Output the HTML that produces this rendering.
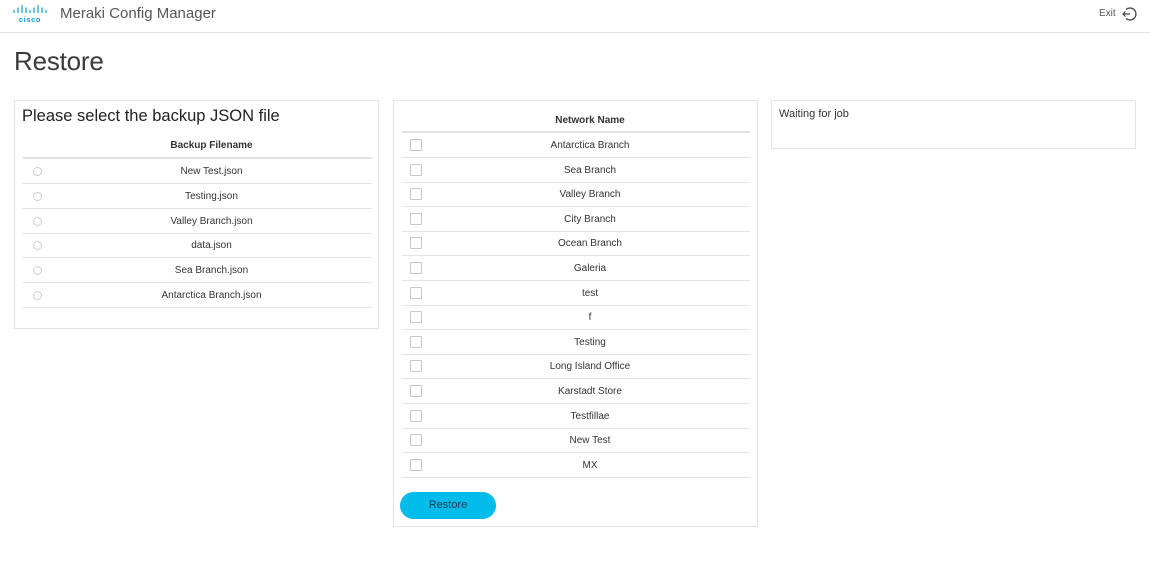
<!DOCTYPE html>
<html><head><style>
*{margin:0;padding:0;box-sizing:border-box}
body{width:1150px;height:561px;background:#fff;font-family:"Liberation Sans",sans-serif;color:#333;position:relative;overflow:hidden}
.a{position:absolute}
.panel{position:absolute;border:1px solid #e3e3e3;background:#fff}
.row{position:absolute;height:25px;border-bottom:1px solid #e3e3e3;font-size:10px;line-height:26px;color:#333}
.row .t{position:absolute;top:0;bottom:0;text-align:center}
.cb{position:absolute;width:12px;height:12px;border:1px solid #c8c8c8;border-radius:1px;top:6px;left:8px}
.rd{position:absolute;width:9px;height:9px;border:1px solid #ccc;border-radius:50%;top:8px;left:10px}
</style></head><body>
<svg class="a" style="left:13px;top:5px" width="34" height="19" viewBox="0 0 34 19">
<g stroke="#049fd9" stroke-width="1.2" stroke-linecap="round">
<line x1="1" y1="5.5" x2="1" y2="7.5"/><line x1="5" y1="3" x2="5" y2="7.5"/><line x1="9" y1="0.8" x2="9" y2="7.5"/><line x1="13" y1="3" x2="13" y2="7.5"/><line x1="17" y1="5.5" x2="17" y2="7.5"/><line x1="21" y1="3" x2="21" y2="7.5"/><line x1="25" y1="0.8" x2="25" y2="7.5"/><line x1="29" y1="3" x2="29" y2="7.5"/><line x1="33" y1="5.5" x2="33" y2="7.5"/></g>
<text x="17" y="17" font-size="7.5" font-weight="bold" fill="#049fd9" text-anchor="middle" font-family="Liberation Sans" letter-spacing="0.6">cisco</text></svg>
<div class="a" style="left:60px;top:5px;font-size:15px;color:#555">Meraki Config Manager</div>
<div class="a" style="left:1099px;top:8px;font-size:10px;color:#555">Exit</div>
<svg class="a" style="left:1121px;top:6px" width="16" height="16" viewBox="0 0 16 16"><path d="M5 3.5A6 6 0 1 1 5 12.5" fill="none" stroke="#444" stroke-width="1.2"/><path d="M2 8H9M4.5 5.5L2 8L4.5 10.5" fill="none" stroke="#444" stroke-width="1.2"/></svg>
<div class="a" style="left:0;top:32px;width:1150px;height:1px;background:#e3e3e3"></div>
<div class="a" style="left:14px;top:46px;font-size:26px;color:#3a3a3a;letter-spacing:-0.2px">Restore</div>

<div class="panel" style="left:14px;top:100px;width:365px;height:229px">
<div class="a" style="left:7px;top:6px;font-size:16.5px;color:#222">Please select the backup JSON file</div>
<div class="a" style="left:8px;top:38px;width:349px;height:20px;border-bottom:2px solid #e3e3e3;font-size:10px;font-weight:bold"><span class="a" style="left:28px;right:0;text-align:center;top:1px">Backup Filename</span></div>
<div id="lrows"></div>
</div>

<div class="panel" style="left:393px;top:100px;width:365px;height:427px">
<div class="a" style="left:8px;top:13px;width:348px;height:19px;border-bottom:2px solid #e3e3e3;font-size:10px;font-weight:bold"><span class="a" style="left:28px;right:0;text-align:center;top:1px">Network Name</span></div>
<div id="rows"></div>
<div class="a" style="left:6px;top:391px;width:96px;height:27px;border-radius:14px;background:#00bceb;font-size:11px;text-align:center;line-height:27px;color:#1a3a4a">Restore</div>
</div>
<script>
var n=["Antarctica Branch","Sea Branch","Valley Branch","City Branch","Ocean Branch","Galeria","test","f","Testing","Long Island Office","Karstadt Store","Testfillae","New Test","MX"];
var h="";n.forEach(function(t,i){h+='<div class="row" style="left:8px;top:'+(32+i*24.6)+'px;width:348px"><span class="cb"></span><span class="t" style="left:28px;right:0">'+t+'</span></div>'});
document.getElementById("rows").innerHTML=h;
var m=["New Test.json","Testing.json","Valley Branch.json","data.json","Sea Branch.json","Antarctica Branch.json"];
h="";m.forEach(function(t,i){h+='<div class="row" style="left:8px;top:'+(58+i*24.8)+'px;width:349px"><span class="rd"></span><span class="t" style="left:28px;right:0">'+t+'</span></div>'});
document.getElementById("lrows").innerHTML=h;
</script>

<div class="panel" style="left:771px;top:100px;width:365px;height:49px">
<div class="a" style="left:7px;top:7px;font-size:11px;color:#333">Waiting for job</div>
</div>
</body></html>
